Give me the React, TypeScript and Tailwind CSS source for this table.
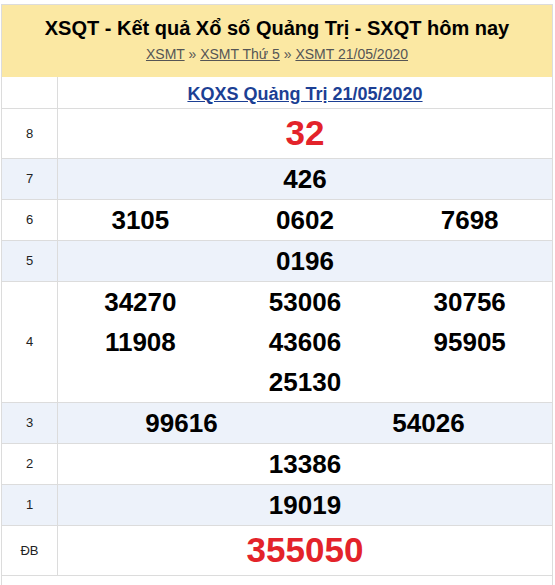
const font = { fontFamily: '"Liberation Sans", Arial, sans-serif' }

type Row = { label: string; nums: string[]; cols: number; big?: boolean; alt?: boolean }

const rows: Row[] = [
  { label: "8", nums: ["32"], cols: 1, big: true },
  { label: "7", nums: ["426"], cols: 1, alt: true },
  { label: "6", nums: ["3105", "0602", "7698"], cols: 3 },
  { label: "5", nums: ["0196"], cols: 1, alt: true },
  { label: "4", nums: ["34270", "53006", "30756", "11908", "43606", "95905", "25130"], cols: 3 },
  { label: "3", nums: ["99616", "54026"], cols: 2, alt: true },
  { label: "2", nums: ["13386"], cols: 1 },
  { label: "1", nums: ["19019"], cols: 1, alt: true },
  { label: "ĐB", nums: ["355050"], cols: 1, big: true },
]

function PrizeRow({ row }: { row: Row }) {
  const width = row.cols === 3 ? "w-1/3" : row.cols === 2 ? "w-1/2" : "w-full"
  return (
    <div className={`flex border-b border-[#dcdcdc] ${row.alt ? "bg-[#edf2fa]" : "bg-white"}`}>
      <div className="w-[56px] shrink-0 border-r border-[#dcdcdc] flex items-center justify-center text-[13px] text-[#222]">
        {row.label}
      </div>
      <div className="flex-1 flex flex-wrap justify-center">
        {row.nums.map((n, i) => (
          <div
            key={i}
            className={
              row.big
                ? `${width} h-[49px] flex items-center justify-center text-[35px] font-bold text-[#e3232a]`
                : `${width} h-[40px] flex items-center justify-center text-[26px] font-bold text-black`
            }
          >
            {n}
          </div>
        ))}
      </div>
    </div>
  )
}

export default function App() {
  return (
    <div className="bg-white min-h-screen pt-[4px]" style={font}>
      <div className="ml-[1px] w-[552px] border border-[#dcdcdc]">
        <div className="bg-[#fbe8a3] h-[72px] flex flex-col items-center">
          <h1 className="text-[20px] font-bold text-black mt-[11px] leading-[24px]">
            XSQT - Kết quả Xổ số Quảng Trị - SXQT hôm nay
          </h1>
          <div className="text-[14px] text-[#555] mt-[6px] leading-[16px]">
            <a href="#" className="underline">XSMT</a> »{" "}
            <a href="#" className="underline">XSMT Thứ 5</a> »{" "}
            <a href="#" className="underline">XSMT 21/05/2020</a>
          </div>
        </div>
        <div className="flex border-b border-[#dcdcdc]">
          <div className="w-[56px] shrink-0 border-r border-[#dcdcdc] h-[31px]" />
          <div className="flex-1 flex items-center justify-center pt-[3px]">
            <a href="#" className="text-[18px] leading-[22px] font-bold text-[#1c3f94] underline">
              KQXS Quảng Trị 21/05/2020
            </a>
          </div>
        </div>
        {rows.map((r) => (
          <PrizeRow key={r.label} row={r} />
        ))}
        <div className="h-[40px]" />
      </div>
    </div>
  )
}
